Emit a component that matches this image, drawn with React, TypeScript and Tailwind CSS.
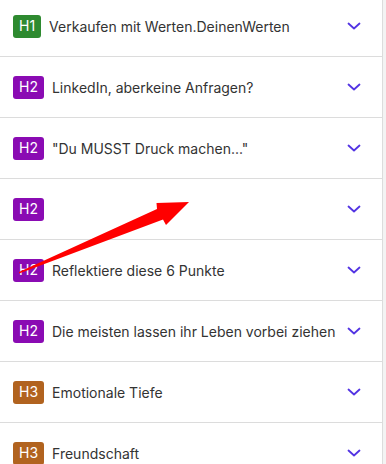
import React from "react";

type Row = { level: "H1" | "H2" | "H3"; label: string };

const rows: Row[] = [
  { level: "H1", label: "Verkaufen mit Werten.DeinenWerten" },
  { level: "H2", label: "LinkedIn, aberkeine Anfragen?" },
  { level: "H2", label: "\"Du MUSST Druck machen...\"" },
  { level: "H2", label: "" },
  { level: "H2", label: "Reflektiere diese 6 Punkte" },
  { level: "H2", label: "Die meisten lassen ihr Leben vorbei ziehen" },
  { level: "H3", label: "Emotionale Tiefe" },
  { level: "H3", label: "Freundschaft" },
];

function Badge({ level }: { level: Row["level"] }) {
  const cls =
    level === "H1"
      ? "bg-[#2e8a30]"
      : level === "H2"
      ? "bg-[#8a0bb3]"
      : "bg-[#b1631f]";
  return (
    <span
      className={`${cls} inline-flex h-[23px] shrink-0 items-center justify-center rounded-[3px] px-[6px] text-[14px] leading-none text-white`}
    >
      {level}
    </span>
  );
}

function Chevron() {
  return (
    <svg width="14" height="8" viewBox="0 0 14 8" className="shrink-0">
      <path
        d="M1.5 1.5 L7 6.5 L12.5 1.5"
        fill="none"
        stroke="#5233e3"
        strokeWidth="1.8"
        strokeLinecap="round"
        strokeLinejoin="round"
      />
    </svg>
  );
}

export default function App() {
  return (
    <div className="relative flex h-[464px] w-[386px] overflow-hidden bg-white font-[Inter,sans-serif]">
      <div className="w-[383px] shrink-0 border-r border-[#dcdcdc]">
        <div className="-mt-[4px]">
          {rows.map((r, i) => (
            <div
              key={i}
              className="flex h-[61px] items-center gap-2 border-b border-[#dcdcdc] pl-[13px] pr-[21px]"
            >
              <Badge level={r.level} />
              <span className="flex-1 truncate text-[14px] text-[#333333]">
                {r.label}
              </span>
              <Chevron />
            </div>
          ))}
        </div>
      </div>
      <div className="flex-1 bg-[#f3f3f3]" />
      <svg
        className="pointer-events-none absolute left-0 top-0"
        width="386"
        height="464"
        viewBox="0 0 386 464"
      >
        <polygon
          points="19,272 157,209 156.5,203 189,202 166,225 163,219.5 19,273.5"
          fill="#ff0000"
        />
      </svg>
    </div>
  );
}
